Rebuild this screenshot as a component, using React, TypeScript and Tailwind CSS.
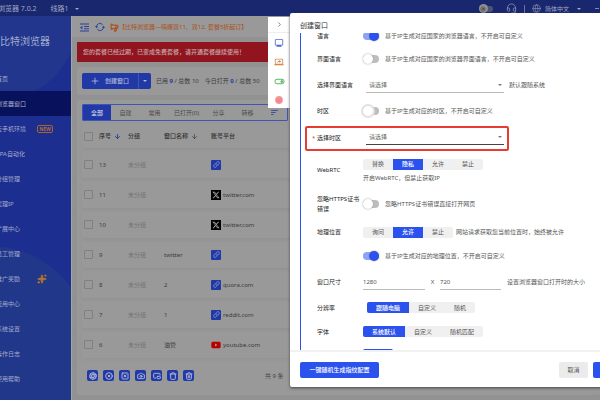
import type { ReactNode } from "react";
import {
  Camera,
  ChevronRight,
  CircleX,
  Aperture,
  Globe,
  Headset,
  Link,
  Megaphone,
  PictureInPicture2,
  Plus,
  Sparkles,
  Trash,
  Trash2,
  SquareX,
  ArrowDown,
  Sun,
} from "lucide-react";
import { FaXTwitter, FaYoutube } from "react-icons/fa6";
import { MdFingerprint, MdOutlineMonitor, MdOutlineToggleOn, MdSort, MdOutlineScreenShare } from "react-icons/md";

const navItems = [
  "首页",
  "浏览器窗口",
  "云手机环境",
  "RPA自动化",
  "分组管理",
  "代理IP",
  "扩展中心",
  "员工管理",
  "推广奖励",
  "费用中心",
  "系统设置",
  "操作日志",
  "使用帮助",
];

const tabs = ["自建", "常用", "已打开(0)", "分享", "转移"];

type Site = "x" | "link" | "youtube";
const rows: { id: number; name: string; site: Site; host: string }[] = [
  { id: 13, name: "", site: "link", host: "" },
  { id: 11, name: "", site: "x", host: "twitter.com" },
  { id: 10, name: "", site: "x", host: "twitter.com" },
  { id: 9, name: "twitter", site: "link", host: "" },
  { id: 8, name: "2", site: "link", host: "quora.com" },
  { id: 7, name: "1", site: "link", host: "reddit.com" },
  { id: 6, name: "油管", site: "youtube", host: "youtube.com" },
];

const bulkActions = [
  { label: "打开", icon: Aperture },
  { label: "关闭", icon: CircleX },
  { label: "停止", icon: SquareX },
  { label: "截图", icon: Camera },
  { label: "排列", icon: PictureInPicture2 },
  { label: "清理", icon: Trash },
  { label: "删除", icon: Trash2 },
];

function Caret({ className = "" }: { className?: string }) {
  return (
    <svg viewBox="0 0 4 2" className={`h-[2px] w-1 shrink-0 fill-current ${className}`} aria-hidden="true">
      <path d="M0 0h4L2 2z" />
    </svg>
  );
}

function MenuFoldIcon() {
  return (
    <svg viewBox="0 0 9 9" className="size-[9px] shrink-0 fill-[#2a3f9c]" aria-hidden="true">
      <path d="M0 .5h9v1H0zM4 3h5v1H4zM4 5.2h5v1H4zM0 7.5h9v1H0zM0 4.6l2.4-1.8v3.6z" />
    </svg>
  );
}

function ReloadIcon() {
  return (
    <svg viewBox="0 0 20 20" className="ml-[6px] size-[10px] shrink-0 fill-none stroke-[#2a3f9c] stroke-[2]" aria-hidden="true">
      <path d="M3 11a7 7 0 0 1 12-6M17 9a7 7 0 0 1-12 6" />
      <path d="M.8 8.6 3 11.4l2.6-2.2M19.2 11.4 17 8.6l-2.6 2.2" />
    </svg>
  );
}

function SiteIcon({ site }: { site: Site }) {
  if (site === "x") {
    return (
      <span className="flex size-[10px] shrink-0 items-center justify-center bg-black text-[#a8a8a8]">
        <FaXTwitter size={8} />
      </span>
    );
  }
  if (site === "youtube") {
    return <FaYoutube size={10} className="shrink-0 bg-[linear-gradient(#999,#999)] bg-[length:4px_4px] bg-center bg-no-repeat text-[#b80000]" />;
  }
  return (
    <span className="flex size-[10px] shrink-0 items-center justify-center rounded-[1px] bg-[#2139a6] text-[#a8b0d8]">
      <Link size={7} />
    </span>
  );
}

function Toggle({ id, on = false, halo = false }: { id: string; on?: boolean; halo?: boolean }) {
  return (
    <input
      id={id}
      type="checkbox"
      defaultChecked={on}
      className={`flex h-2 w-4 shrink-0 appearance-none items-center rounded-full bg-[#bdbdbd] before:size-[10px] before:shrink-0 before:rounded-full before:bg-white checked:justify-end checked:bg-[#8fa2f5] checked:before:bg-[#2c52ed] ${
        halo ? "before:shadow-[0_0_0_2px_#e2e2e2,0_0_2px_#777]" : "before:shadow-[0_0_2px_#999]"
      }`}
    />
  );
}

function Field({ label, className, children }: { label: string; className: string; children: ReactNode }) {
  return (
    <div className={`flex shrink-0 items-center ${className}`}>
      <div className="w-[46px] shrink-0 leading-[10px] text-[#222]">{label}</div>
      {children}
    </div>
  );
}

function SwitchField({
  label,
  id,
  text,
  className,
  on,
  halo,
}: {
  label: string;
  id: string;
  text: string;
  className: string;
  on?: boolean;
  halo?: boolean;
}) {
  return (
    <Field label={label} className={className}>
      <label htmlFor={id} className="flex items-center gap-[6px] whitespace-nowrap">
        <Toggle id={id} on={on} halo={halo} />
        {text}
      </label>
    </Field>
  );
}

function Segments({ options, active, className = "" }: { options: string[]; active: string; className?: string }) {
  return (
    <div className={`flex w-max shrink-0 overflow-hidden rounded-[2px] bg-[#f0f0f0] ${className}`}>
      {options.map((o) => (
        <button
          key={o}
          type="button"
          className={`h-[11px] px-[9px] whitespace-nowrap ${o === active ? "bg-[#2c52ed] font-medium text-white" : "text-[#555]"}`}
        >
          {o}
        </button>
      ))}
    </div>
  );
}

function SelectBox({ label, line }: { label: string; line: string }) {
  return (
    <div className={`ml-[3px] flex h-[15px] w-[138px] shrink-0 items-center border-b pr-[2px] ${line}`}>
      <select aria-label={label} className="min-w-0 flex-1 appearance-none bg-transparent pl-[3px] text-[#666]">
        <option>请选择</option>
      </select>
      <Caret className="text-[#777]" />
    </div>
  );
}

function TopBar() {
  return (
    <header className="flex h-4 shrink-0 items-center justify-between bg-[#19276f] pt-px text-[7px] leading-[10px] text-[#a3a8c4]">
      <div className="-ml-[2px] flex items-center whitespace-nowrap">
        <span>浏览器 7.0.2</span>
        <button type="button" className="ml-[14px] flex items-center gap-[6px]">
          线路1 <Caret />
        </button>
      </div>
      <div className="flex items-center pr-px text-[6px]">
        <span className="mr-[13px] flex h-[6px] w-[14px] items-center rounded-full bg-[#4c5479]">
          <span className="flex size-[9px] shrink-0 items-center justify-center rounded-full bg-[#8f8f8f] text-[#222]">
            <Sun size={6} />
          </span>
        </span>
        <Headset size={11} className="text-[#8088b0]" />
        <span className="mx-[7px] h-2 w-px bg-[#6c749e]" />
        <button type="button" className="flex items-center gap-1 whitespace-nowrap">
          <Globe size={9} className="text-[#8088b0]" />
          简体中文
          <Caret className="ml-1" />
        </button>
        <span className="ml-[14px] h-px w-1 bg-[#8088b0]" />
      </div>
    </header>
  );
}

function Sidebar() {
  return (
    <aside className="relative w-[71px] shrink-0 overflow-hidden bg-[#1c2e8f] text-[#a4abce]">
      <div className="absolute -top-[64px] -left-[70px] size-[146px] rounded-full bg-[#21368c]" />
      <div className="absolute top-[230px] -left-[110px] size-[200px] rounded-full bg-[#20378a]" />
      <div className="relative">
        <div className="flex h-[50px] items-center text-[10px] whitespace-nowrap">比特浏览器</div>
        <nav>
          {navItems.map((item) => (
            <a
              key={item}
              href="#"
              className={`flex h-[25px] items-center whitespace-nowrap ${item === "浏览器窗口" ? "bg-[#07115c] text-[#b4b8d0]" : ""}`}
            >
              <span className="-ml-1">{item}</span>
              {item === "云手机环境" && (
                <span className="ml-[11px] flex h-2 w-4 items-center justify-center rounded-[2px] border border-[#a9632c] text-[5px] font-bold text-[#b86c2c]">
                  NEW
                </span>
              )}
              {item === "推广奖励" && <Sparkles size={10} className="ml-[17px] fill-current text-[#b5752f]" />}
            </a>
          ))}
        </nav>
      </div>
    </aside>
  );
}

function WindowTable() {
  const box = "block size-[9px] appearance-none rounded-[1px] border border-[#808080]";
  return (
    <table className="w-full table-fixed border-separate border-spacing-x-0 border-spacing-y-[3px] text-left whitespace-nowrap">
      <colgroup>
        <col className="w-[17px]" />
        <col className="w-[29px]" />
        <col className="w-[36px]" />
        <col className="w-[47px]" />
        <col />
      </colgroup>
      <thead>
        <tr className="h-6 text-[#2e2e2e] shadow-[0_1px_3px_#909090]">
          <th className="pl-[2px]">
            <input type="checkbox" aria-label="全选" className={box} />
          </th>
          <th className="font-medium">
            <span className="flex items-center gap-[3px]">
              序号 <ArrowDown size={7} strokeWidth={3} className="text-[#2139a6]" />
            </span>
          </th>
          <th className="font-medium">分组</th>
          <th className="font-medium">
            <span className="flex items-center gap-[3px]">
              窗口名称 <ArrowDown size={7} />
            </span>
          </th>
          <th className="font-medium">账号平台</th>
        </tr>
      </thead>
      <tbody>
        {rows.map((r) => (
          <tr key={r.id} className="h-[27px] text-[#3b3b3b] shadow-[0_1px_3px_#909090]">
            <td className="pl-[2px]">
              <input type="checkbox" aria-label={`选择 ${r.id}`} className={box} />
            </td>
            <td>{r.id}</td>
            <td className="text-[#737373]">未分组</td>
            <td>{r.name}</td>
            <td>
              <span className="flex items-center gap-[2px]">
                <SiteIcon site={r.site} />
                {r.host}
              </span>
            </td>
          </tr>
        ))}
      </tbody>
    </table>
  );
}

function Workspace() {
  return (
    <main className="min-w-0 flex-1 overflow-hidden border-l border-[#a5a5a5] bg-[#929292]">
      <div className="flex h-[21px] items-center bg-[#999] pt-px pl-2 text-[#ad4f1b]">
        <MenuFoldIcon />
        <ReloadIcon />
        <Megaphone size={9} strokeWidth={3} className="ml-[5px] -scale-x-100" />
        <span className="whitespace-nowrap">【比特浏览器—嗨爆双11、双12, 套餐5折起订】</span>
      </div>
      <div className="mt-[5px] ml-[5px] flex h-5 items-center bg-[#90151f] pl-[6px] font-medium whitespace-nowrap text-[#c8a5a8]">
        您的套餐已经过期，已变成免费套餐，请开通套餐继续使用！
      </div>
      <section className="mt-[5px] ml-[5px] flex h-7 items-center rounded-[2px] bg-[#999] pl-[5px] whitespace-nowrap text-[#3b3b3b]">
        <div className="flex h-4 items-center overflow-hidden rounded-[2px] bg-[#2139a6] text-[#b2b8d8]">
          <button type="button" className="flex h-full w-14 items-center gap-[5px] pl-2 font-medium">
            <Plus size={10} />
            创建窗口
          </button>
          <button type="button" aria-label="更多" className="flex h-full w-[13px] items-center justify-center border-l border-[#4256a8]">
            <Caret />
          </button>
        </div>
        <span className="ml-[5px]">
          已用 <b className="text-[#2139a6]">9</b> / 总数 10
        </span>
        <span className="ml-[6px]">
          今日打开 <b className="text-[#2139a6]">0</b> / 总数 50
        </span>
      </section>
      <section className="mt-[5px] ml-[5px] rounded-[2px] bg-[#999] pt-[4px] pb-[14px] pl-[5px]">
        <div className="flex h-[17px] w-[206px] items-stretch rounded-[1px] border border-[#3d55b4] whitespace-nowrap text-[#4a4a4a]">
          <button type="button" className="w-7 bg-[#2139a6] font-bold text-[#b8bedb]">
            全部
          </button>
          {tabs.map((t) => (
            <button key={t} type="button" className={t.startsWith("已") ? "w-[35px]" : "w-[29px]"}>
              {t}
            </button>
          ))}
          <button type="button" aria-label="排序" className="flex flex-1 items-center justify-center text-[#2139a6]">
            <MdSort size={9} />
          </button>
        </div>
        <WindowTable />
        <div className="mt-[9px] flex h-[11px] items-center gap-[5px] pl-[5px]">
          {bulkActions.map(({ label, icon: Icon }) => (
            <button
              key={label}
              type="button"
              aria-label={label}
              className="flex size-[11px] items-center justify-center rounded-[2px] bg-[#2139a6] text-[#aab1d6]"
            >
              <Icon size={8} strokeWidth={3} />
            </button>
          ))}
          <span className="ml-[66px] text-[#444]">共 9 条</span>
        </div>
      </section>
    </main>
  );
}

function ToolStrip() {
  return (
    <div className="absolute top-[17px] left-[268px] flex h-[91px] w-[22px] flex-col items-center bg-white">
      <button type="button" aria-label="收起" className="flex h-4 w-full shrink-0 items-center justify-center border-b border-[#eee] text-[#333]">
        <ChevronRight size={7} />
      </button>
      <div className="flex flex-1 flex-col items-center justify-around">
        <MdOutlineMonitor size={10} className="text-[#4c68d8]" />
        <MdOutlineScreenShare size={10} className="text-[#cf8a4b]" />
        <MdOutlineToggleOn size={11} className="text-[#58b95c]" />
        <MdFingerprint size={8} className="rounded-full bg-[#f6a5a9] text-[#e0656c]" />
      </div>
    </div>
  );
}

function CreateDialog() {
  const input = "h-[15px] border-b border-[#bbb] bg-transparent text-[#555]";
  return (
    <div
      role="dialog"
      aria-label="创建窗口"
      className="absolute top-[13px] -right-6 bottom-[13px] left-[290px] flex flex-col rounded-l-[2px] bg-white pl-[10px] text-[#555] shadow-[0_1px_3px_#444]"
    >
      <h2 className="h-5 shrink-0 pt-[8px] text-[7px] leading-[9px] text-[#333]">创建窗口</h2>
      <div className="min-h-0 flex-1 overflow-hidden border-l border-[#2c52ed] pl-4 whitespace-nowrap">
        <div className="-mt-[7px] flex flex-col">
          <SwitchField label="语言" id="lang" on className="h-5" text="基于IP生成对应国家的浏览器语言，不开启可自定义" />
          <SwitchField label="界面语言" id="ui-lang" className="h-[26px]" text="基于IP生成对应国家的浏览器界面语言，不开启可自定义" />
          <Field label="选择界面语言" className="h-[26px]">
            <SelectBox label="选择界面语言" line="border-[#bbb]" />
            <span className="ml-[5px]">默认跟随系统</span>
          </Field>
          <SwitchField label="时区" id="tz" halo className="h-[25px]" text="基于IP生成对应的时区，不开启可自定义" />
          <div className="my-[3px] -ml-3 flex h-[25px] w-[204px] items-center rounded-[2px] border-2 border-[#e83c32] pb-[2px] pl-[5px]">
            <span className="w-[5px] text-[#e83c32]">*</span>
            <Field label="选择时区" className="h-full">
              <SelectBox label="选择时区" line="border-[#444]" />
            </Field>
          </div>
          <Field label="WebRTC" className="h-8">
            <div className="flex flex-col gap-[4px]">
              <Segments options={["替换", "隐私", "允许", "禁止"]} active="隐私" />
              <span>开启WebRTC，但禁止获取IP</span>
            </div>
          </Field>
          <div className="whitespace-normal">
            <SwitchField label="忽略HTTPS证书错误" id="https" className="h-9" text="忽略HTTPS证书错误直接打开网页" />
          </div>
          <Field label="地理位置" className="h-5">
            <Segments options={["询问", "允许", "禁止"]} active="允许" />
            <span className="ml-[3px]">网站请求获取您当前位置时，始终被允许</span>
          </Field>
          <SwitchField label="" id="geo" on className="h-[27px]" text="基于IP生成对应的地理位置，不开启可自定义" />
          <Field label="窗口尺寸" className="h-[26px]">
            <input aria-label="宽度" defaultValue="1280" className={`${input} w-[62px]`} />
            <span className="w-[15px] text-center">X</span>
            <input aria-label="高度" defaultValue="720" className={`${input} w-[61px]`} />
            <span className="ml-[6px]">设置浏览器窗口打开时的大小</span>
          </Field>
          <Field label="分辨率" className="h-[25px]">
            <Segments options={["跟随电脑", "自定义", "随机"]} active="跟随电脑" className="ml-1" />
          </Field>
          <Field label="字体" className="h-[23px]">
            <Segments options={["系统默认", "自定义", "随机匹配"]} active="系统默认" />
          </Field>
          <Field label="" className="h-[23px]">
            <Segments options={["添加"]} active="添加" />
          </Field>
        </div>
      </div>
      <footer className="-ml-[10px] flex h-[37px] shrink-0 items-center justify-between border-t-2 border-[#f2f2f2] pl-[10px]">
        <button type="button" className="h-4 w-[79px] rounded-[2px] bg-[#2c52ed] font-medium text-white">
          一键随机生成指纹配置
        </button>
        <div className="flex gap-[5px]">
          <button type="button" className="h-4 w-[29px] rounded-[2px] bg-[#ebebeb]">
            取消
          </button>
          <button type="button" aria-label="确定" className="h-4 w-[31px] rounded-[2px] bg-[#2c52ed]" />
        </div>
      </footer>
    </div>
  );
}

export default function App() {
  return (
    <div className="relative flex h-screen flex-col overflow-hidden font-['Noto_Sans','Noto_Sans_CJK_SC',sans-serif] text-[6px] leading-[8px]">
      <TopBar />
      <div className="flex min-h-0 flex-1">
        <Sidebar />
        <Workspace />
      </div>
      <ToolStrip />
      <CreateDialog />
    </div>
  );
}
